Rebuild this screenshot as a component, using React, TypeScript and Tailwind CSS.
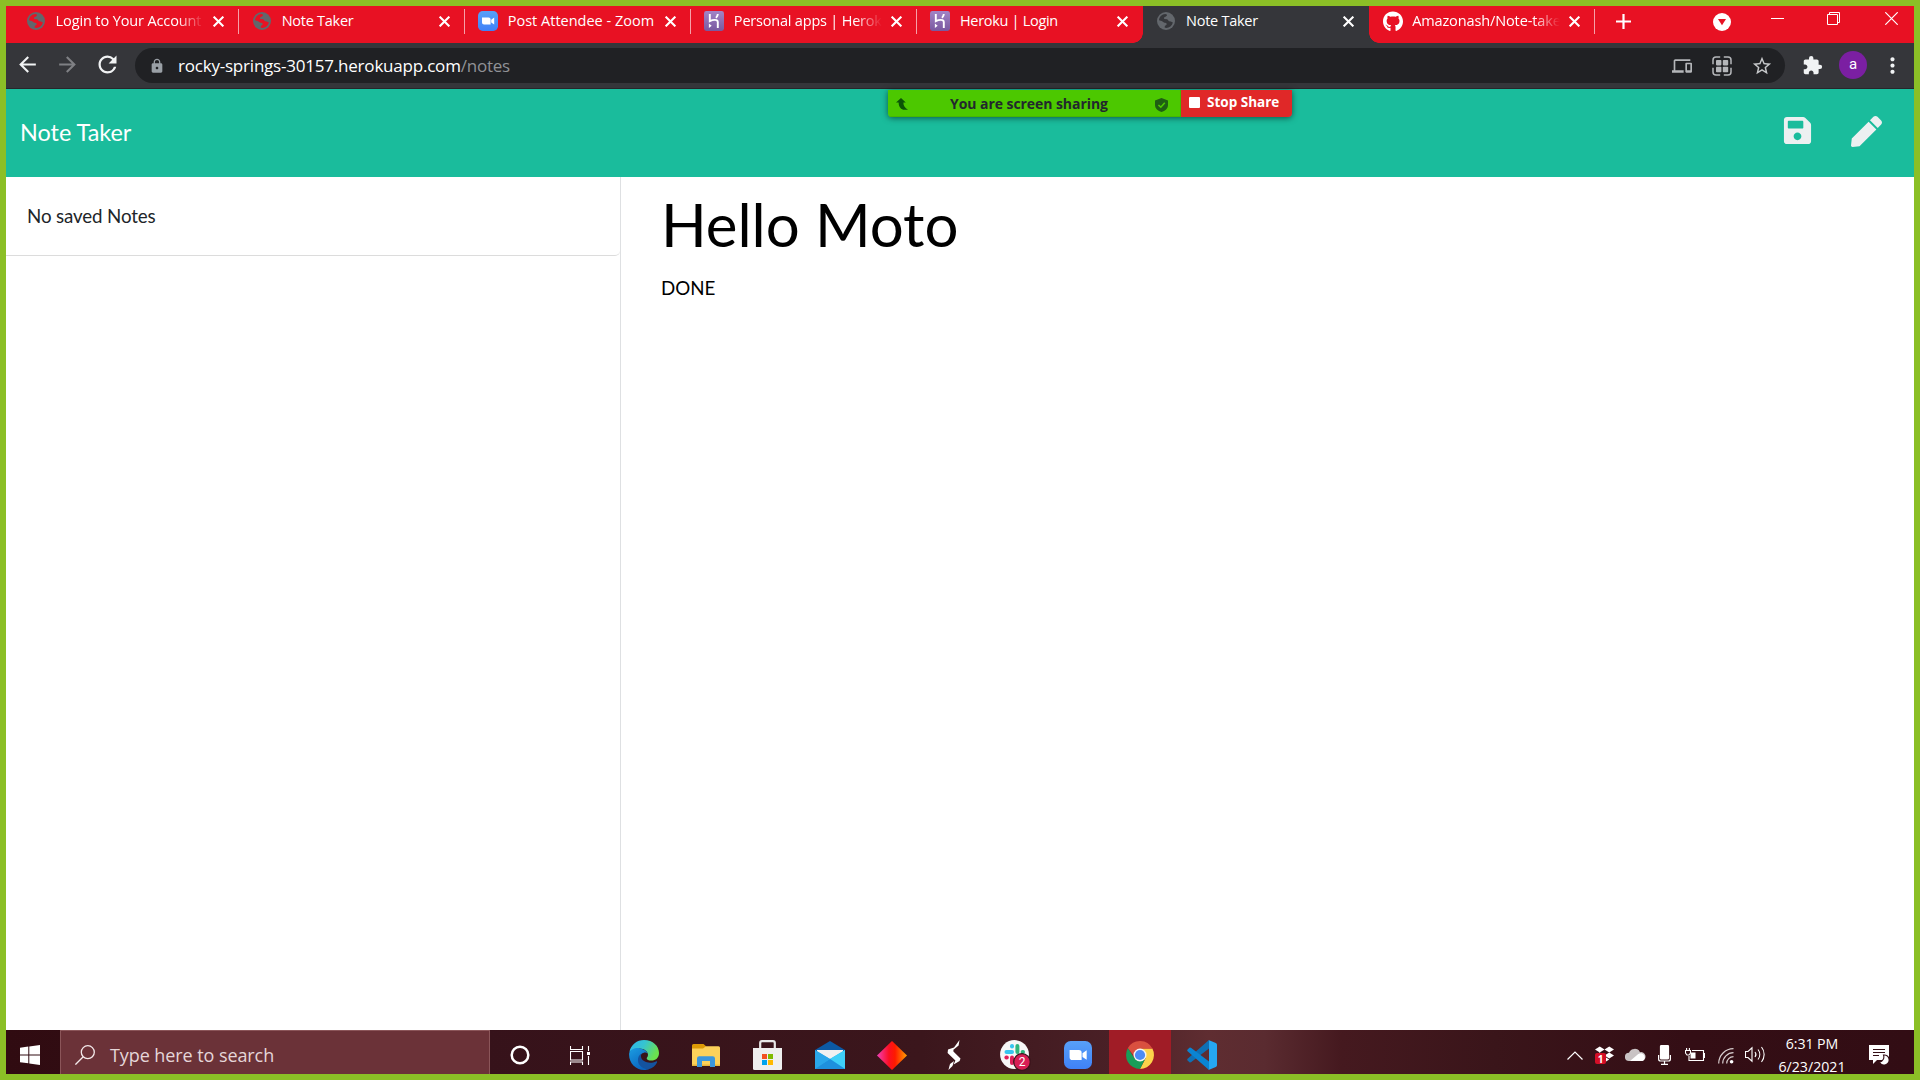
import type { ReactNode } from "react";
import { MdArrowBack, MdArrowForward, MdDevices, MdExtension, MdLock, MdMoreVert, MdRefresh, MdStarOutline } from "react-icons/md";
import { FaDropbox, FaGithub, FaPen, FaSave } from "react-icons/fa";

function Globe({ hole }: { hole: string }) {
  return (
    <svg viewBox="0 0 18 18" className="size-[18px]">
      <circle cx="9" cy="9" r="9" fill="#63676c" />
      <path
        d="M2 8.2C2.3 4.6 5 2.3 8.2 2L9.8 2.4L10 3.6L8.5 4.7L7.2 5.2L7.1 7L10.2 7.2L12 9.2L13.8 9.6L15.9 10.4C15 13.6 12.4 15.8 9.2 16L7.6 15.6L7.7 14L9.6 12.7L9.4 11.1L6.2 10.6L4.6 9L2 8.2Z"
        fill={hole}
      />
      <path d="M2.2 9L5.4 9.6L7.6 11.2L9 11.6L8.6 13L7.4 13.6L7.2 15.8C4.2 15 2 12.4 2.2 9Z" fill="#63676c" />
    </svg>
  );
}

function ZoomLogo({ id, className }: { id: string; className: string }) {
  return (
    <svg viewBox="0 0 20 20" className={className}>
      <defs>
        <linearGradient id={id} x1="0" y1="0" x2="0" y2="1">
          <stop offset="0" stopColor="#58a0f8" />
          <stop offset="1" stopColor="#3f81f7" />
        </linearGradient>
      </defs>
      <rect width="20" height="20" rx="4.8" fill={`url(#${id})`} />
      <path d="M4 6.4H10.6Q12.6 6.4 12.6 8.4V13.6H6Q4 13.6 4 11.6ZM13.2 8.7L16.2 6.6V13.4L13.2 11.4Z" fill="#fff" />
    </svg>
  );
}

function HerokuLogo({ id }: { id: string }) {
  return (
    <svg viewBox="0 0 20 20" className="size-5">
      <defs>
        <linearGradient id={id} x1="0" y1="0" x2="0" y2="1">
          <stop offset="0" stopColor="#a284c6" />
          <stop offset="1" stopColor="#79589f" />
        </linearGradient>
      </defs>
      <rect width="20" height="20" rx="2.4" fill={`url(#${id})`} />
      <path d="M5.8 3V10.2C8.5 8.8 13.8 7.8 13.8 11.2V17M13.8 3C13.8 4.6 13 5.8 12 6.8" fill="none" stroke="#fff" strokeWidth="1.9" />
      <path d="M4.9 12.5L7.7 14.8L4.9 17Z" fill="#fff" />
    </svg>
  );
}

type TabData = { title: string; icon: ReactNode; text: string; active?: boolean; fade?: boolean; line?: boolean };

const tabs: TabData[] = [
  { title: "Login to Your Account", icon: <Globe hole="#e81123" />, text: "tracking-[-0.12px]", fade: true, line: true },
  { title: "Note Taker", icon: <Globe hole="#e81123" />, text: "tracking-[-0.26px]", line: true },
  { title: "Post Attendee - Zoom", icon: <ZoomLogo id="tabzoom" className="size-5" />, text: "", line: true },
  { title: "Personal apps | Heroku", icon: <HerokuLogo id="hk1" />, text: "tracking-[-0.2px]", fade: true, line: true },
  { title: "Heroku | Login", icon: <HerokuLogo id="hk2" />, text: "tracking-[-0.3px]" },
  { title: "Note Taker", icon: <Globe hole="#35363a" />, text: "tracking-[-0.26px]", active: true },
  { title: "Amazonash/Note-taker", icon: <FaGithub className="size-[21px] text-white" />, text: "tracking-[-0.12px]", fade: true, line: true },
];

function Tab({ title, icon, text, active, fade, line }: TabData) {
  return (
    <div className={`relative flex h-full w-[226.1px] shrink-0 items-start ${active ? "bg-[#35363a]" : ""}`}>
      <span className="ml-[13.4px] mt-[5px] flex size-5 shrink-0 items-center justify-center">{icon}</span>
      <span
        className={`ml-[9.6px] mt-[3px] w-[148px] shrink-0 overflow-hidden whitespace-nowrap text-[14.5px] leading-6 text-white ${text} ${
          fade ? "[mask-image:linear-gradient(to_right,black_82%,transparent_100%)]" : ""
        }`}
      >
        {title}
      </span>
      <svg viewBox="0 0 10 10" className="ml-[9px] mt-[10px] size-[11px] shrink-0">
        <path d="M0.6 0.6L9.4 9.4M9.4 0.6L0.6 9.4" stroke="#fff" strokeWidth="1.9" />
      </svg>
      {line && <span className="absolute right-0 top-[3px] h-[25px] w-px bg-[#f6a0a8]" />}
      {active && (
        <>
          <span className="absolute bottom-0 right-full size-[10px] bg-[radial-gradient(circle_at_0_0,transparent_9.5px,#35363a_10px)]" />
          <span className="absolute bottom-0 left-full size-[10px] bg-[radial-gradient(circle_at_100%_0,transparent_9.5px,#35363a_10px)]" />
        </>
      )}
    </div>
  );
}

function TabBar() {
  return (
    <div className="flex h-[37px] shrink-0 bg-[#e81123] pl-[6.6px]">
      {tabs.map((t, i) => (
        <Tab key={i} {...t} />
      ))}
      <svg viewBox="0 0 15 15" className="ml-[21px] mt-2 size-[15px] shrink-0">
        <path d="M7.5 0V15M0 7.5H15" stroke="#fff" strokeWidth="2.2" />
      </svg>
      <svg viewBox="0 0 18 18" className="ml-[82px] mt-[7px] size-[18px] shrink-0">
        <circle cx="9" cy="9" r="9" fill="#fff" />
        <path d="M5 6H13L9 12.3Z" fill="#e81123" />
      </svg>
      <span className="ml-10 mt-3 h-px w-[13px] shrink-0 bg-white" />
      <svg viewBox="0 0 13 13" className="ml-[43px] mt-[6px] size-[13px] shrink-0" fill="none" stroke="#fff">
        <path d="M0.5 2.5H10.5V12.5H0.5ZM2.5 2.5V0.5H12.5V10.5H10.5" />
      </svg>
      <svg viewBox="0 0 13 13" className="ml-[45px] mt-[6px] size-[13px] shrink-0" stroke="#fff" strokeWidth="1.2">
        <path d="M0.3 0.3L12.7 12.7M12.7 0.3L0.3 12.7" />
      </svg>
    </div>
  );
}

function Toolbar() {
  return (
    <div className="flex h-[46px] shrink-0 items-start border-b border-[#26272a] bg-[#35363a] text-[#f1f3f4]">
      <MdArrowBack className="ml-[9px] mt-[9px] size-[25px] shrink-0" />
      <MdArrowForward className="ml-[15px] mt-[9px] size-[25px] shrink-0 text-[#7f8084]" />
      <MdRefresh className="ml-[14px] mt-[8px] size-[27px] shrink-0" />
      <div className="ml-[14px] mt-[5px] flex h-[35px] w-[1650px] shrink-0 items-center rounded-full bg-[#202124]">
        <MdLock className="ml-[14px] size-4 shrink-0 text-[#9aa0a6]" />
        <span className="ml-[13px] whitespace-nowrap text-[17px] leading-6 tracking-[-0.21px] text-white">
          rocky-springs-30157.herokuapp.com<span className="text-[#909296]">/notes</span>
        </span>
        <span className="grow" />
        <MdDevices className="size-5 text-[#b4b6b9]" />
        <svg viewBox="0 0 20 20" className="ml-5 size-5" fill="#b4b6b9">
          <path
            d="M1 8.2V4Q1 1 4 1H8.2M11.8 1H16Q19 1 19 4V8.2M19 11.8V16Q19 19 16 19H11.8M8.2 19H4Q1 19 1 16V11.8"
            fill="none"
            stroke="#b4b6b9"
            strokeWidth="1.5"
          />
          <rect x="4" y="4" width="5.4" height="5.4" rx="0.8" />
          <rect x="10.8" y="4" width="5.4" height="5.4" rx="0.8" />
          <rect x="4" y="10.8" width="5.4" height="5.4" rx="0.8" />
          <rect x="10.8" y="10.8" width="5.4" height="5.4" rx="0.8" />
        </svg>
        <MdStarOutline className="ml-[19px] mr-3 size-[22px] text-[#c6c8ca]" />
      </div>
      <MdExtension className="ml-[17px] mt-[12px] size-[21px] shrink-0" />
      <span className="ml-[16px] mt-[8px] flex size-7 shrink-0 items-center justify-center rounded-full bg-[#7b1fa2] pb-px font-[Roboto] text-[15px] text-white">a</span>
      <MdMoreVert className="ml-[13px] mt-[10px] size-[25px] shrink-0" />
    </div>
  );
}

function ShareBanner() {
  return (
    <div className="absolute left-[882px] top-[84px] flex h-[27px] w-[404px] overflow-hidden rounded-b-[4px] font-bold shadow-[0_1px_6px_rgba(0,0,0,0.55)]">
      <div className="flex w-[293px] items-center border-b border-r border-[#46b800] bg-[#4cc800] text-[#22272e]">
        <svg viewBox="0 0 12 12" className="ml-2 mt-[2px] size-3" fill="#0b5406">
          <path d="M5 0L9.8 4.4H7.4C7.3 7.6 8.8 9.6 12 11.8H7.2C4 10.4 2.6 8 2.6 4.4H0Z" />
        </svg>
        <span className="ml-[42px] mt-px whitespace-nowrap text-[14px] leading-6 tracking-[-0.06px]">You are screen sharing</span>
        <svg viewBox="0 0 13 14" className="ml-[47px] mt-[3px] h-[14px] w-[13px]">
          <path d="M6.5 0L13 2.4V7C13 10.4 10 13 6.5 14C3 13 0 10.4 0 7V2.4Z" fill="#1f5f13" />
          <path d="M3.4 7L5.8 9.2L9.8 4.8" fill="none" stroke="#4cc800" strokeWidth="1.6" />
        </svg>
      </div>
      <div className="flex grow items-start bg-[#e02828] text-white">
        <span className="ml-2 mt-[7px] size-[11px] rounded-[1px] bg-white" />
        <span className="ml-[7px] whitespace-nowrap text-[13.5px] leading-[25px]">Stop Share</span>
      </div>
    </div>
  );
}

function NotesPage() {
  return (
    <>
      <header className="flex h-[88px] shrink-0 items-center bg-[#1abc9c] font-[Lato]">
        <h1 className="ml-[14px] -translate-y-px text-[23.4px] leading-8 text-white">Note Taker</h1>
        <FaSave className="ml-auto mr-[38px] size-[31px] -translate-y-[3px] text-[#ecf0f1]" />
        <FaPen className="mr-8 size-[31px] -translate-y-[2px] text-[#ecf0f1]" />
      </header>
      <main className="flex min-h-0 grow bg-white font-[Lato]">
        <aside className="w-[615px] shrink-0 border-r border-[#dee0e2]">
          <div className="h-[79px] rounded-br-[5px] border-b border-b-[#dcdcdc] pl-[21px] pt-[25px] text-[18.75px] leading-7 tracking-[-0.14px] text-[#212529]">
            No saved Notes
          </div>
        </aside>
        <section className="pl-10 text-black">
          <div className="pt-[11px] text-[60px] leading-[72px] tracking-[-0.05px]">Hello Moto</div>
          <div className="mt-[14px] text-[18.75px] leading-7">DONE</div>
        </section>
      </main>
    </>
  );
}

function EdgeLogo() {
  return (
    <svg viewBox="0 0 30 30" className="size-[30px]">
      <defs>
        <linearGradient id="edgeTop" x1="0" y1="0" x2="1" y2="0.4">
          <stop offset="0" stopColor="#2cb4ee" />
          <stop offset="0.5" stopColor="#36c4d0" />
          <stop offset="1" stopColor="#6be04e" />
        </linearGradient>
        <linearGradient id="edgeLow" x1="0" y1="0" x2="0.6" y2="1">
          <stop offset="0" stopColor="#1b9de2" />
          <stop offset="1" stopColor="#0a63bd" />
        </linearGradient>
      </defs>
      <path d="M0.4 12C2 4.5 8 0 15 0C24 0 30 6 30 13C30 18 26.5 20.5 22.5 20.5C19.5 20.5 17.7 19.4 17.7 18.4C17.7 17.6 19 17 19 14.8C19 11.5 15 8.5 10.5 8.5C5.5 8.5 1.5 11 0.4 12Z" fill="url(#edgeTop)" />
      <path d="M0.2 13C1.5 9.5 6 7.6 10.5 8.2C14 8.7 17.5 10.6 18.8 13.2C15.5 11.5 10.8 13.6 10.8 18.5C10.8 24 15 28.6 20 29C18.5 29.8 16.5 30 15 30C6 30 -0.8 22 0.2 13Z" fill="url(#edgeLow)" />
      <path d="M12.6 13.6C10 15 8.6 18 9 21C9.5 25.5 14 29.3 19.5 29.2C23.5 28.2 26.6 25.4 28 22.4C28.4 21.5 27.8 21.1 27 21.5C21.5 24.3 12.5 22.5 12 16.6C11.9 15.3 12.1 14.3 12.6 13.6Z" fill="#14539f" />
    </svg>
  );
}

function ExplorerLogo() {
  return (
    <svg viewBox="0 0 28 23" className="h-[23px] w-7">
      <path d="M0 1.5Q0 0 1.5 0H11.5L14 2.2V6H0Z" fill="#dd9a06" />
      <path d="M0 4.5H11L14 2.2H26.5Q28 2.2 28 3.7V22H0Z" fill="#fcd15a" />
      <path d="M0 20.5H28V22H0Z" fill="#eab53a" />
      <path d="M5 23V14.5Q5 12.2 7.3 12.2H20.7Q23 12.2 23 14.5V23H18V17H10V23Z" fill="#3b96dc" />
    </svg>
  );
}

function StoreLogo() {
  return (
    <svg viewBox="0 0 29 30" className="h-[30px] w-[29px]">
      <path d="M7.2 9V3Q7.2 1.2 9 1.2H20Q21.8 1.2 21.8 3V9" fill="none" stroke="#e8e8e8" strokeWidth="2.2" />
      <path d="M0 8H29V28.5Q29 30 27.5 30H1.5Q0 30 0 28.5Z" fill="#efefef" />
      <path d="M9 14H14V19H9Z" fill="#f25022" />
      <path d="M15 14H20V19H15Z" fill="#7fba00" />
      <path d="M9 20H14V25H9Z" fill="#00a4ef" />
      <path d="M15 20H20V25H15Z" fill="#ffb900" />
    </svg>
  );
}

function MailLogo() {
  return (
    <svg viewBox="0 0 30 28" className="h-7 w-[30px]">
      <path d="M0 9L15 0L30 9V12H0Z" fill="#0c59a4" />
      <path d="M2 9H28V14L15 20L2 14Z" fill="#f1f1f1" />
      <path d="M0 9L15 18L30 9V28H0Z" fill="#2db1ee" />
      <path d="M15 18L30 9V28Z" fill="#3fd0f8" />
      <path d="M0 28L0 27L15 18L30 28Z" fill="#1e90dd" />
      <path d="M0 9L15 18L0 28Z" fill="#2aa6ea" />
    </svg>
  );
}

function DiamondLogo() {
  return (
    <svg viewBox="0 0 30 29" className="h-[29px] w-[30px]">
      <defs>
        <linearGradient id="dia">
          <stop offset="0" stopColor="#f23fb8" />
          <stop offset="0.4" stopColor="#fb0f22" />
          <stop offset="0.6" stopColor="#fe1a00" />
          <stop offset="1" stopColor="#ffa000" />
        </linearGradient>
      </defs>
      <path d="M15 0L30 14.5L15 29L0 14.5Z" fill="url(#dia)" />
    </svg>
  );
}

function BoltLogo() {
  return (
    <svg viewBox="0 0 14 30" className="h-[30px] w-3.5" fill="#fff">
      <path d="M12.5 0L11.6 5.6L6.4 9.8V11.4L13.5 18.4L12.6 21L6.6 24.6L8.4 20.4L0.6 13L1 9.6L7 7.4Z" />
      <path d="M7 21L5.5 26L1.4 30L3 24Z" />
    </svg>
  );
}

function SlackLogo() {
  return (
    <svg viewBox="0 0 31 31" className="size-[31px]">
      <circle cx="14.5" cy="14.5" r="14.4" fill="#f7f7f7" />
      <g strokeWidth="4" strokeLinecap="round">
        <path d="M6.5 12H12" stroke="#36c5f0" />
        <path d="M12 6V6.4" stroke="#36c5f0" />
        <path d="M17.4 6V12" stroke="#2eb67d" />
        <path d="M22.6 12H23" stroke="#2eb67d" />
        <path d="M12 17.6V23" stroke="#e01e5a" />
        <path d="M6.4 17.6H6.8" stroke="#e01e5a" />
        <path d="M17.6 17.6H23" stroke="#ecb22e" />
      </g>
      <circle cx="22" cy="22" r="8.3" fill="#d81e55" stroke="#3a151c" strokeWidth="1.3" />
      <text x="22" y="26.2" textAnchor="middle" fontSize="12" fill="#fff" fontFamily="Roboto">2</text>
    </svg>
  );
}

function ChromeLogo() {
  return (
    <svg viewBox="0 0 28 28" className="size-7">
      <path d="M14 7.6H26.4A14 14 0 0 1 14 28L19.5 17.4Z" fill="#fdd24a" />
      <path d="M8.4 17.2L1.9 7A14 14 0 0 0 14 28L19.4 17.6Z" fill="#199d58" />
      <path d="M1.9 7A14 14 0 0 1 26.4 7.6H14L8 15Z" fill="#d9503f" />
      <circle cx="14" cy="14" r="6.5" fill="#f4f4f4" />
      <circle cx="14" cy="14" r="5.1" fill="#4c8bf5" />
    </svg>
  );
}

function CodeLogo() {
  return (
    <svg viewBox="0 0 30 30" className="size-[30px]">
      <path d="M0.6 20.6L2.4 22.2Q3.3 22.8 4.3 22L22 8.6V0L0.6 18.8Q-0.2 19.7 0.6 20.6Z" fill="#0f70b4" />
      <path d="M0.6 9.4L2.4 7.8Q3.3 7.2 4.3 8L22 21.4V30L0.6 11.2Q-0.2 10.3 0.6 9.4Z" fill="#0a84d2" />
      <path d="M21.5 0L28.8 3Q30 3.6 30 4.8V25.2Q30 26.4 28.8 27L21.5 30Q22 29.6 22 28.5V1.5Q22 0.4 21.5 0Z" fill="#26a7f2" />
    </svg>
  );
}

const apps: ReactNode[] = [
  <svg viewBox="0 0 20 20" className="size-5">
    <circle cx="10" cy="10" r="8.3" fill="none" stroke="#fff" strokeWidth="2.5" />
  </svg>,
  <svg viewBox="0 0 20 19" className="h-[19px] w-5" fill="none" stroke="#fff" strokeWidth="1.1">
    <path d="M0.5 0V3.5H12.5V0M0.5 5.5H12.5V14H0.5ZM0.5 19V16H12.5V19M18.5 0V5M18.5 10V19" />
    <rect x="17" y="6" width="3" height="3" fill="#fff" stroke="none" />
  </svg>,
  <EdgeLogo />,
  <ExplorerLogo />,
  <StoreLogo />,
  <MailLogo />,
  <DiamondLogo />,
  <BoltLogo />,
  <SlackLogo />,
  <ZoomLogo id="taskzoom" className="size-7" />,
  <ChromeLogo />,
  <CodeLogo />,
];

function Tray() {
  return (
    <div className="ml-auto flex h-full items-start text-white">
      <svg viewBox="0 0 16 9" className="mt-[21px] h-[9px] w-4" fill="none" stroke="#fff" strokeWidth="1.2">
        <path d="M0.5 8.5L8 1L15.5 8.5" />
      </svg>
      <span className="relative ml-3 mt-[15px] size-[19px]">
        <FaDropbox className="size-[19px]" />
        <span className="absolute left-0 top-2 flex h-[11px] w-[11px] items-center justify-center rounded-[2px] bg-[#d40f26] text-[10px] font-bold leading-none">1</span>
      </span>
      <svg viewBox="0 0 21 13" className="ml-[11px] mt-[18px] h-[13px] w-[21px]">
        <path d="M4 13A4 4 0 0 1 4 4.8A6 6 0 0 1 15 4.2A4.5 4.5 0 0 1 17 13Z" fill="#c9c3c4" />
        <path d="M5 13L13 6.2Q16 4.6 18 6A4 4 0 0 1 17.5 13Z" fill="#fff" />
      </svg>
      <svg viewBox="0 0 13 20" className="ml-3 mt-[15px] h-5 w-[13px]" fill="none" stroke="#fff" strokeWidth="1.2">
        <rect x="2.5" y="0.5" width="8" height="13.5" rx="1" fill="#fff" />
        <path d="M0.6 10V14Q0.6 16 2.6 16H10.4Q12.4 16 12.4 14V10M6.5 16V19.4M3 19.4H10" />
      </svg>
      <svg viewBox="0 0 20 14" className="ml-[14px] mt-[18px] h-3.5 w-5" fill="none" stroke="#fff" strokeWidth="1.1">
        <path d="M7 2.5H18.5V12.5H4V8M18.8 5.5H19.6V9.5H18.8M0.5 2.5H5.5V5L4 7H2L0.5 5ZM1.6 0V2.5M4.4 0V2.5" />
        <rect x="5.5" y="4.5" width="5" height="6" fill="#fff" stroke="none" />
      </svg>
      <svg viewBox="0 0 16 16" className="ml-[13px] mt-[18px] size-4" fill="none" stroke="#d9cfd0" strokeWidth="1.2">
        <path d="M0.7 15.5A14.8 14.8 0 0 1 15.5 0.7M4.7 15.5A10.8 10.8 0 0 1 15.5 4.7M8.7 15.5A6.8 6.8 0 0 1 15.5 8.7" />
        <circle cx="13.6" cy="13.8" r="1.8" fill="#fff" stroke="none" />
      </svg>
      <svg viewBox="0 0 21 17" className="ml-[11px] mt-4 h-[17px] w-[21px]" fill="none" stroke="#fff" strokeWidth="1.1">
        <path d="M0.5 5.5H3L7 1.8V15.2L3 11.5H0.5Z" />
        <path d="M10 6A4 4 0 0 1 10 11M13 3.5A8 8 0 0 1 13 13.5M16.5 1A12 12 0 0 1 16.5 16" />
      </svg>
      <div className="ml-3 flex h-full w-[68px] flex-col items-center whitespace-nowrap text-[14.2px] leading-[23px]">
        <span className="mt-[2px] tracking-[-0.1px]">6:31 PM</span>
        <span className="h-[19px]">6/23/2021</span>
      </div>
      <svg viewBox="0 0 20 20" className="ml-[23px] mr-[25px] mt-[15px] size-5">
        <path d="M0 0H20V15H8L4 19V15H0Z" fill="#fff" />
        <path d="M4 4.5H16M4 7.5H16M4 10.5H10" stroke="#340e15" strokeWidth="1.1" />
        <path d="M14.5 10A5 5 0 1 1 10.5 17A5.2 5.2 0 0 0 14.5 10Z" fill="#fff" stroke="#340e15" strokeWidth="1.1" />
      </svg>
    </div>
  );
}

function Taskbar() {
  return (
    <div className="flex h-[44px] shrink-0 bg-[linear-gradient(to_right,#300b11_0,#36121a_25%,#3b161c_48%,#4a2026_58%,#5f2d31_63%,#5a2b30_66%,#45191f_70%,#3a151a_78%,#340e15_88%,#320d14_100%)]">
      <svg viewBox="0 0 20 20" className="ml-[14px] mt-[15px] size-5 shrink-0" fill="#fff">
        <path d="M0 2.8L8.3 1.6V9.4H0ZM9.3 1.4L20 0V9.4H9.3ZM0 10.4H8.3V18.3L0 17.2ZM9.3 10.4H20V20L9.3 18.5Z" />
      </svg>
      <div className="ml-5 flex w-[430px] shrink-0 items-start border-x border-t border-[#8b5559] bg-[#6b3238]">
        <svg viewBox="0 0 20 20" className="ml-[14px] mt-[14px] size-5" fill="none" stroke="#f3e9ea" strokeWidth="1.3">
          <circle cx="12.8" cy="7.2" r="6.5" />
          <path d="M8.2 11.8L0.4 19.6" />
        </svg>
        <span className="ml-[15px] mt-[10px] whitespace-nowrap text-[18px] leading-7 tracking-[-0.08px] text-[#e5d6d8]">Type here to search</span>
      </div>
      {apps.map((icon, i) => (
        <span
          key={i}
          className={`flex h-full shrink-0 items-center justify-center pt-[6px] ${i === 10 ? "bg-[#a01c26]" : ""} ${
            i === 0 ? "w-[60px]" : i === 1 ? "mr-[3.5px] w-[59px]" : "w-[62px]"
          }`}
        >
          {icon}
        </span>
      ))}
      <Tray />
    </div>
  );
}

export default function App() {
  return (
    <div className="relative flex h-[1080px] w-[1920px] flex-col overflow-hidden border-6 border-[#8bbf26] font-['Open_Sans',sans-serif]">
      <TabBar />
      <Toolbar />
      <NotesPage />
      <Taskbar />
      <ShareBanner />
    </div>
  );
}
